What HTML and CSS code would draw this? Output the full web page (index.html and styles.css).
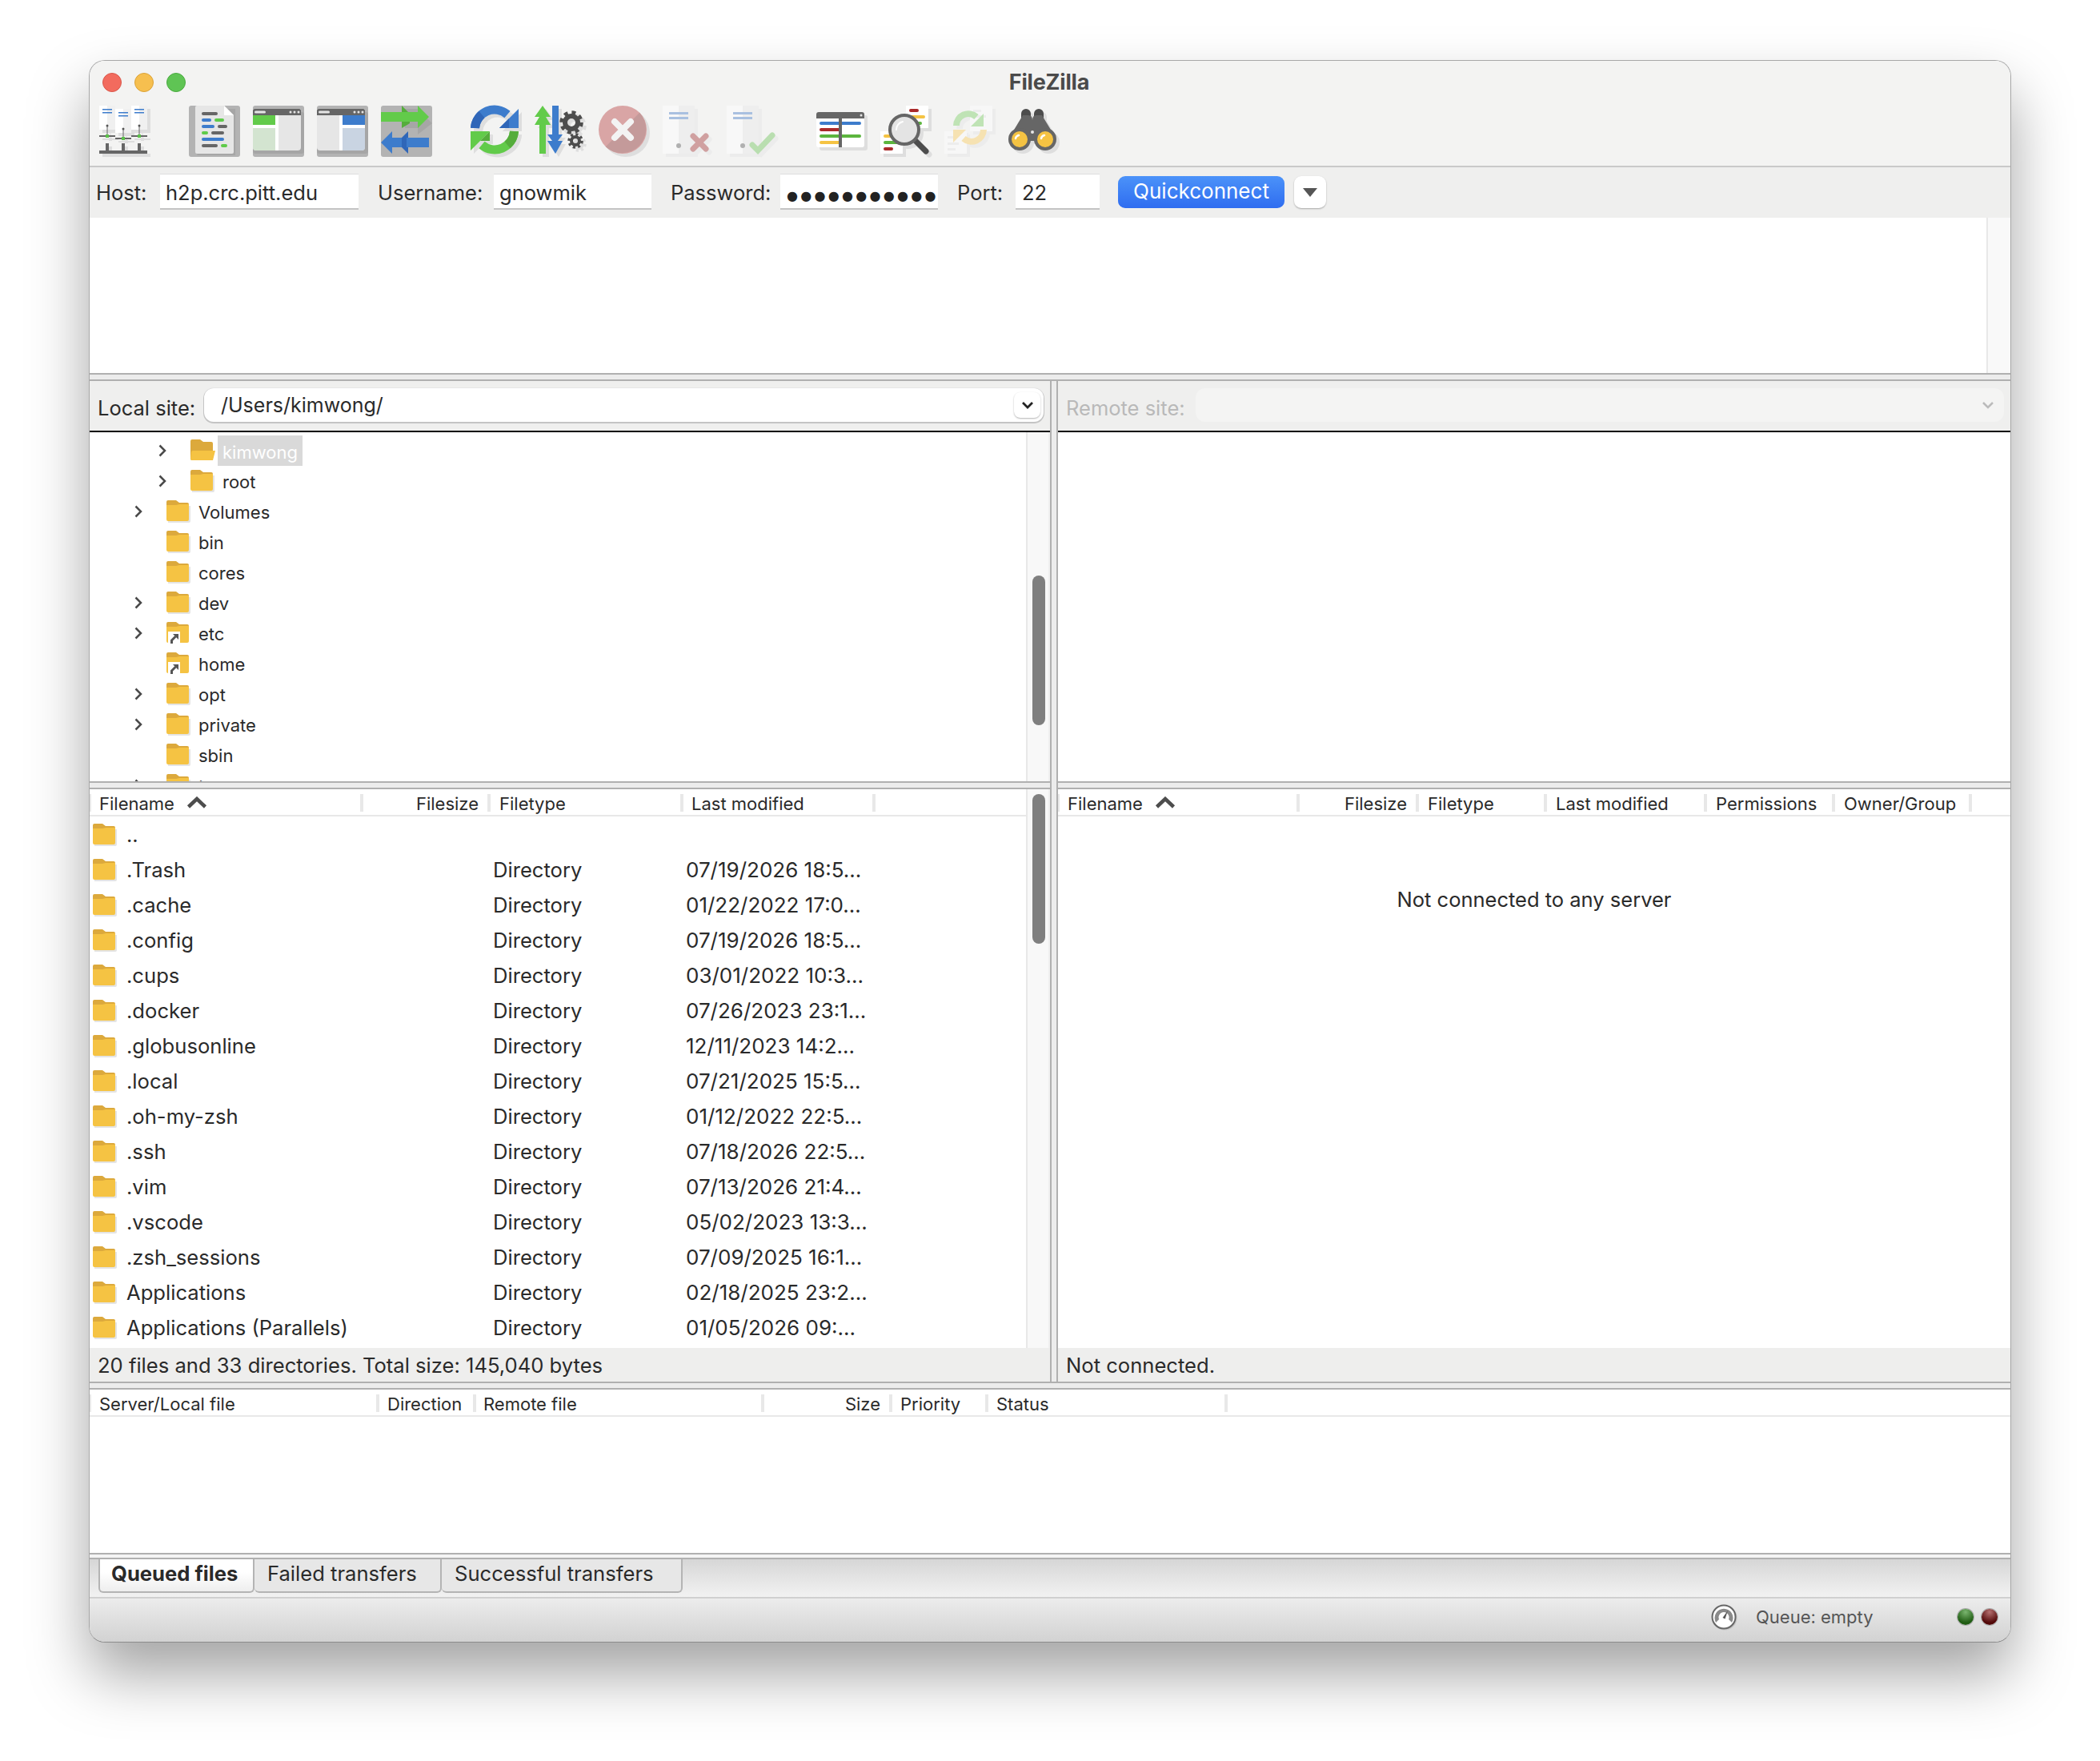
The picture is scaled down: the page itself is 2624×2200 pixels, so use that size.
FILE: index.html
```html
<!DOCTYPE html>
<html lang="en">
<head>
  <meta charset="UTF-8">
  <title>FileZilla</title>
  <link rel="stylesheet" href="styles.css">
</head>
<body>

  <!-- shared icons -->
  <svg class="defs" width="0" height="0">
    <symbol id="folder" viewBox="0 0 30 28">
      <path d="M2 7h28v19a2 2 0 0 1-2 2H2z" fill="#e4e4e4"/>
      <path d="M0 2a2 2 0 0 1 2-2h10l4 3h10a2 2 0 0 1 2 2v6H0z" fill="#dca93c"/>
      <path d="M0 6h12l4-1h12v19a2 2 0 0 1-2 2H2a2 2 0 0 1-2-2z" fill="#f5c343"/>
    </symbol>
    <symbol id="folder-open" viewBox="0 0 32 28">
      <path d="M0 2a2 2 0 0 1 2-2h10l4 3h10a2 2 0 0 1 2 2v19a2 2 0 0 1-2 2H2a2 2 0 0 1-2-2z" fill="#dca93c"/>
      <path d="M3 14h28l-3 12H2a2 2 0 0 1-2-2l1-8a2 2 0 0 1 2-2z" fill="#f5c343"/>
    </symbol>
    <symbol id="folder-link" viewBox="0 0 30 28">
      <path d="M0 2a2 2 0 0 1 2-2h10l4 3h10a2 2 0 0 1 2 2v6H0z" fill="#dca93c"/>
      <path d="M0 6h12l4-1h12v19a2 2 0 0 1-2 2H2a2 2 0 0 1-2-2z" fill="#f5c343"/>
      <rect x="2" y="12" width="15" height="16" fill="#fff"/>
      <path d="M6.500 27v-4l5-5" fill="none" stroke="#555" stroke-width="3"/>
      <path d="M8 15h7v7z" fill="#555"/>
    </symbol>
    <symbol id="chevron" viewBox="0 0 10 16">
      <path d="M1.500 1.500 8 8l-6.500 6.500" fill="none" stroke="#4a4a4a" stroke-width="2.500"/>
    </symbol>
    <symbol id="sort-up" viewBox="0 0 26 16">
      <path d="M2.500 13 13 3l10.500 10" fill="none" stroke="#4d4d4d" stroke-width="4.500"/>
    </symbol>
  </svg>

  <div class="window">

    <div class="titlebar">
      <div class="lights">
        <span class="light red"></span>
        <span class="light yellow"></span>
        <span class="light green"></span>
      </div>
      <div class="title">FileZilla</div>
    </div>

    <div class="toolbar">
      <!-- site manager -->
      <svg class="tool shadowed" viewBox="0 0 64 64">
        <rect x="0" y="0" width="10" height="30" fill="#fff"/><rect x="10" y="0" width="10" height="30" fill="#f0f0f0"/>
        <rect x="40" y="0" width="10" height="30" fill="#fff"/><rect x="50" y="0" width="10" height="30" fill="#f0f0f0"/>
        <rect x="20" y="4" width="10" height="30" fill="#fff"/><rect x="30" y="4" width="10" height="30" fill="#f0f0f0"/>
        <path d="M4 4h12v1.500H4zM4 8h12v1.500H4zM44 4h12v1.500H44zM44 8h12v1.500H44zM24 8h12v1.500H24zM24 12h12v1.500H24z" fill="#3d7ccc"/>
        <path d="M9.500 25h1v13h-1zM49.500 25h1v13h-1zM29.500 29h1v12h-1z" fill="#666"/>
        <path d="M0 37h20v2H0zM40 37h20v2H40zM20 40h20v2H20zM8 47h4v9H8zM28 47h4v9h-4zM48 47h4v9h-4zM0 56h60v4H0z" fill="#666"/>
        <circle cx="10" cy="25" r="1.500" fill="#555"/><circle cx="50" cy="25" r="1.500" fill="#555"/><circle cx="30" cy="29" r="1.500" fill="#555"/>
        <path d="M8 36h4v4H8zM48 36h4v4h-4zM28 39h4v4h-4z" fill="#5cc24a"/>
      </svg>
      <!-- message log -->
      <svg class="tool sep" viewBox="0 0 64 64">
        <rect width="64" height="64" rx="3" fill="#b3b3b3"/>
        <path d="M10 4h48v58H12a2 2 0 0 1-2-2z" fill="#a6a6a6"/>
        <path d="M8 2a2 2 0 0 1 2-2h34l12 12v46a2 2 0 0 1-2 2H10a2 2 0 0 1-2-2z" fill="#e6e6e6"/>
        <path d="M44 0l12 12H44z" fill="#fff"/>
        <g fill="#666"><rect x="16" y="8" width="20" height="4" rx="2"/><rect x="36" y="24" width="12" height="4" rx="2"/><rect x="28" y="32" width="16" height="4" rx="2"/><rect x="16" y="48" width="20" height="4" rx="2"/></g>
        <g fill="#3d7ccc"><rect x="16" y="16" width="12" height="4" rx="2"/><rect x="16" y="24" width="16" height="4" rx="2"/><rect x="16" y="40" width="28" height="4" rx="2"/></g>
        <g fill="#5fcb4a"><rect x="32" y="16" width="12" height="4" rx="2"/><rect x="16" y="32" width="8" height="4" rx="2"/><rect x="40" y="48" width="8" height="4" rx="2"/></g>
      </svg>
      <!-- local tree -->
      <svg class="tool" viewBox="0 0 64 64">
        <rect width="64" height="64" rx="3" fill="#b3b3b3"/>
        <rect x="0" y="8" width="64" height="52" rx="3" fill="#a6a6a6"/>
        <path d="M0 4h60v48a4 4 0 0 1-4 4H4a4 4 0 0 1-4-4z" fill="#e6e6e6"/>
        <path d="M0 12h28v12H0z" fill="#62cb4a"/><path d="M0 28h28v28H4a4 4 0 0 1-4-4z" fill="#d3e4d0"/>
        <path d="M0 24h32v4H0zM28 12h4v44h-4z" fill="#fff"/>
        <path d="M0 6a2 2 0 0 1 2-2h56a2 2 0 0 1 2 2v6H0z" fill="#666"/>
        <rect x="2" y="6.500" width="14" height="3" rx="1.500" fill="#e6e6e6"/>
        <g fill="#e6e6e6"><circle cx="47" cy="8" r="1.500"/><circle cx="52" cy="8" r="1.500"/><circle cx="57" cy="8" r="1.500"/></g>
      </svg>
      <!-- remote tree -->
      <svg class="tool" viewBox="0 0 64 64">
        <rect width="64" height="64" rx="3" fill="#b3b3b3"/>
        <rect x="0" y="8" width="64" height="52" rx="3" fill="#a6a6a6"/>
        <path d="M0 4h60v48a4 4 0 0 1-4 4H4a4 4 0 0 1-4-4z" fill="#e6e6e6"/>
        <path d="M32 12h28v12H32z" fill="#3d7ccc"/><path d="M32 28h28v24a4 4 0 0 1-4 4H32z" fill="#c9d4e2"/>
        <path d="M32 24h28v4H32zM28 12h4v44h-4z" fill="#fff"/>
        <path d="M0 6a2 2 0 0 1 2-2h56a2 2 0 0 1 2 2v6H0z" fill="#666"/>
        <rect x="2" y="6.500" width="14" height="3" rx="1.500" fill="#e6e6e6"/>
        <g fill="#e6e6e6"><circle cx="47" cy="8" r="1.500"/><circle cx="52" cy="8" r="1.500"/><circle cx="57" cy="8" r="1.500"/></g>
      </svg>
      <!-- transfer queue -->
      <svg class="tool" viewBox="0 0 64 64">
        <rect width="64" height="64" rx="3" fill="#b3b3b3"/>
        <path d="M30 4h16l18 18-18 14v-8H30z" fill="#a6a6a6"/>
        <path d="M26 0l10 10v12l-10 6z" fill="#55ad3c"/>
        <path d="M0 8h46V0l14 14-14 14v-8H0z" fill="#62cb4a"/>
        <path d="M60 40H14v-8L0 46l14 14v-8h46z" fill="#3d7ccc"/>
        <path d="M34 32l-8 8v12l8 8v-8h-2V40h2z" fill="#2f66b8"/>
      </svg>
      <!-- refresh -->
      <svg class="tool sep shadowed" viewBox="0 0 64 64">
        <path d="M5.500 28A24.500 24.500 0 0 1 46 11" fill="none" stroke="#3d7ccc" stroke-width="11"/>
        <path d="M5.500 28A24.500 24.500 0 0 1 14 11" fill="none" stroke="#2f66b8" stroke-width="11"/>
        <path d="M60 4v24H36z" fill="#3d7ccc"/><path d="M48 16l-12 12h12z" fill="#2f66b8"/>
        <path d="M54.500 32A24.500 24.500 0 0 1 14 49" fill="none" stroke="#62cb4a" stroke-width="11"/>
        <path d="M54.500 32A24.500 24.500 0 0 1 46 49" fill="none" stroke="#55ad3c" stroke-width="11"/>
        <path d="M0 56V32h24z" fill="#62cb4a"/><path d="M12 44l12-12v12z" fill="#55ad3c"/>
      </svg>
      <!-- processing -->
      <svg class="tool shadowed" viewBox="0 0 64 64">
        <path d="M6 60V24H0l6-10H0L10 0l10 14h-6l6 10h-6v36z" fill="#62cb4a"/>
        <path d="M22 0h8v36h5l-6 8h6L26 60 16 44h6l-6-8h6z" fill="#3d7ccc"/>
        <g fill="none" stroke="#4d4d4d">
          <circle cx="46" cy="21" r="12.500" stroke-width="4.500" stroke-dasharray="4.900 4.920"/>
          <circle cx="46" cy="21" r="8" stroke-width="6"/>
          <circle cx="51" cy="44" r="8" stroke-width="3.500" stroke-dasharray="3.100 3.180"/>
          <circle cx="51" cy="44" r="5" stroke-width="4"/>
        </g>
      </svg>
      <!-- cancel, disabled -->
      <svg class="tool shadowed" viewBox="0 0 64 64">
        <circle cx="30" cy="30" r="30" fill="#d9a5a5"/>
        <path d="M51.200 8.800A30 30 0 0 1 8.800 51.200z" fill="#c49a9a"/>
        <path d="M20 20l20 20M40 20 20 40" stroke="#f3f3f3" stroke-width="8" stroke-linecap="round"/>
      </svg>
      <!-- disconnect, disabled -->
      <svg class="tool shadowed-light" viewBox="0 0 64 64">
        <rect width="20" height="60" fill="#f8f8f8"/><rect x="20" width="20" height="60" fill="#eee"/>
        <path d="M8 8h24v3H8zM8 14h24v3H8z" fill="#a9c0e0"/>
        <circle cx="20" cy="50" r="3" fill="#b0b0b0"/>
        <path d="M38 38l16 16M54 38 38 54" stroke="#d0a0a0" stroke-width="7" stroke-linecap="round"/>
      </svg>
      <!-- reconnect, disabled -->
      <svg class="tool shadowed-light" viewBox="0 0 64 64">
        <rect width="20" height="60" fill="#f8f8f8"/><rect x="20" width="20" height="60" fill="#eee"/>
        <path d="M8 8h24v3H8zM8 14h24v3H8z" fill="#a9c0e0"/>
        <circle cx="20" cy="50" r="3" fill="#b0b0b0"/>
        <path d="M32 49l7 7 18-19" fill="none" stroke="#b9deb0" stroke-width="7" stroke-linecap="round"/>
      </svg>
      <!-- filename filters -->
      <svg class="tool sep shadowed" viewBox="0 0 64 64">
        <rect x="0" y="8" width="60" height="44" rx="3" fill="#fff"/>
        <path d="M0 11a3 3 0 0 1 3-3h54a3 3 0 0 1 3 3v5H0z" fill="#666"/>
        <circle cx="56" cy="12" r="1.500" fill="#e6e6e6"/>
        <rect x="4" y="20" width="52" height="4" rx="2" fill="#3d7ccc"/>
        <rect x="4" y="28" width="26" height="4" rx="2" fill="#aa2a2a"/>
        <rect x="4" y="36" width="52" height="4" rx="2" fill="#5cb53e"/>
        <rect x="4" y="44" width="26" height="4" rx="2" fill="#f5c343"/>
        <rect x="28" y="16" width="4" height="36" fill="#666"/>
      </svg>
      <!-- compare -->
      <svg class="tool shadowed" viewBox="0 0 64 64">
        <rect x="32" y="0" width="28" height="28" fill="#fff"/>
        <rect x="0" y="32" width="28" height="28" fill="#fff"/>
        <rect x="36" y="4" width="12" height="4" rx="2" fill="#aa2a2a"/>
        <rect x="36" y="12" width="20" height="4" rx="2" fill="#f5c343"/>
        <rect x="36" y="20" width="16" height="4" rx="2" fill="#5cb53e"/>
        <rect x="4" y="36" width="16" height="4" rx="2" fill="#f5c343"/>
        <rect x="4" y="44" width="20" height="4" rx="2" fill="#5cb53e"/>
        <rect x="4" y="52" width="12" height="4" rx="2" fill="#aa2a2a"/>
        <path d="M43 43l14 14" stroke="#4d4d4d" stroke-width="7" stroke-linecap="round"/>
        <circle cx="30" cy="30" r="18" fill="#e4e4e4" stroke="#666" stroke-width="4"/>
        <path d="M20 30a10 10 0 0 1 8-10" fill="none" stroke="#fff" stroke-width="2" stroke-linecap="round"/>
      </svg>
      <!-- synchronized browsing, disabled -->
      <svg class="tool shadowed-light" viewBox="0 0 64 64">
        <rect x="32" y="0" width="28" height="32" fill="#f7f7f7"/>
        <rect x="0" y="32" width="28" height="28" fill="#f7f7f7"/>
        <path d="M36 5h10v3H36zM4 38h10v3H4zM4 46h14v3H4zM4 53h10v3H4zM36 12h16v3H36z" fill="#ededed"/>
        <path d="M15 25A15 15 0 0 1 40 14" fill="none" stroke="#bfe3b5" stroke-width="8"/>
        <path d="M49 10v16H33z" fill="#bfe3b5"/>
        <path d="M49 30A15 15 0 0 1 24 41" fill="none" stroke="#f6e2b2" stroke-width="8"/>
        <path d="M11 46V30h16z" fill="#f6e2b2"/>
      </svg>
      <!-- search -->
      <svg class="tool shadowed" viewBox="0 0 64 64">
        <path d="M16 10a6 6 0 0 1 12 0v8H16zM32 10a6 6 0 0 1 12 0v8H32z" fill="#4d4d4d"/>
        <path d="M18 12h7q5 0 5 6 0-6 5-6h7l17 28v2H30 1v-2z" fill="#666"/>
        <circle cx="14" cy="42" r="14" fill="#666"/>
        <circle cx="46" cy="42" r="14" fill="#666"/>
        <path d="M20 30h20v14H20z" fill="#666"/>
        <circle cx="14" cy="42" r="10" fill="#f5c343"/>
        <circle cx="46" cy="42" r="10" fill="#f5c343"/>
        <path d="M9 41a5 5 0 0 1 4-4M41 41a5 5 0 0 1 4-4" fill="none" stroke="#fff" stroke-width="2.500" stroke-linecap="round"/>
        <circle cx="30" cy="33" r="2" fill="#e6e6e6"/>
      </svg>
    </div>

    <div class="connect">
      <span class="connect-label w-host">Host:</span>
      <div class="field f-host">h2p.crc.pitt.edu</div>
      <span class="connect-label w-user">Username:</span>
      <div class="field f-user">gnowmik</div>
      <span class="connect-label w-pass">Password:</span>
      <div class="field f-pass"><span class="dots">●●●●●●●●●●●●</span></div>
      <span class="connect-label w-port">Port:</span>
      <div class="field f-port">22</div>
      <div class="quick">Quickconnect</div>
      <div class="quick-drop"><span class="tri"></span></div>
    </div>

    <div class="log">
      <div class="log-text"></div>
      <div class="log-track"></div>
    </div>

    <div class="sash-h"></div>

    <div class="panes">

      <!-- local side -->
      <div class="pane">
        <div class="site-bar">
          <span class="site-label">Local site:</span>
          <div class="combo">
            <span class="combo-text">/Users/kimwong/</span>
            <span class="combo-btn">
              <svg width="16" height="10" viewBox="0 0 16 10"><path d="M2 2l6 6 6-6" fill="none" stroke="#222" stroke-width="2.800"/></svg>
            </span>
          </div>
        </div>

        <div class="tree-wrap">
          <div class="tree">
            <div class="tree-row lvl2"><svg class="chev"><use href="#chevron"/></svg><svg class="ficon-open"><use href="#folder-open"/></svg><span class="tree-label selected">kimwong</span></div>
            <div class="tree-row lvl2"><svg class="chev"><use href="#chevron"/></svg><svg class="ficon"><use href="#folder"/></svg><span class="tree-label">root</span></div>
            <div class="tree-row lvl1"><svg class="chev"><use href="#chevron"/></svg><svg class="ficon"><use href="#folder"/></svg><span class="tree-label">Volumes</span></div>
            <div class="tree-row lvl1"><span class="chev"></span><svg class="ficon"><use href="#folder"/></svg><span class="tree-label">bin</span></div>
            <div class="tree-row lvl1"><span class="chev"></span><svg class="ficon"><use href="#folder"/></svg><span class="tree-label">cores</span></div>
            <div class="tree-row lvl1"><svg class="chev"><use href="#chevron"/></svg><svg class="ficon"><use href="#folder"/></svg><span class="tree-label">dev</span></div>
            <div class="tree-row lvl1"><svg class="chev"><use href="#chevron"/></svg><svg class="ficon"><use href="#folder-link"/></svg><span class="tree-label">etc</span></div>
            <div class="tree-row lvl1"><span class="chev"></span><svg class="ficon"><use href="#folder-link"/></svg><span class="tree-label">home</span></div>
            <div class="tree-row lvl1"><svg class="chev"><use href="#chevron"/></svg><svg class="ficon"><use href="#folder"/></svg><span class="tree-label">opt</span></div>
            <div class="tree-row lvl1"><svg class="chev"><use href="#chevron"/></svg><svg class="ficon"><use href="#folder"/></svg><span class="tree-label">private</span></div>
            <div class="tree-row lvl1"><span class="chev"></span><svg class="ficon"><use href="#folder"/></svg><span class="tree-label">sbin</span></div>
            <div class="tree-row lvl1"><svg class="chev"><use href="#chevron"/></svg><svg class="ficon"><use href="#folder"/></svg><span class="tree-label">tmp</span></div>
          </div>
          <div class="track"><div class="thumb thumb-tree"></div></div>
        </div>

        <div class="sash-pane"></div>

        <div class="list-wrap">
          <div class="list">
            <div class="list-head">
              <div class="hcell c-name">Filename <svg class="sort"><use href="#sort-up"/></svg></div>
              <div class="hcell right c-size">Filesize</div>
              <div class="hcell c-type">Filetype</div>
              <div class="hcell c-date">Last modified</div>
            </div>
            <div class="file-row"><span class="file-name"><svg class="ficon"><use href="#folder"/></svg>..</span></div>
            <div class="file-row"><span class="file-name"><svg class="ficon"><use href="#folder"/></svg>.Trash</span><span>Directory</span><span class="file-date">07/19/2026 18:5...</span></div>
            <div class="file-row"><span class="file-name"><svg class="ficon"><use href="#folder"/></svg>.cache</span><span>Directory</span><span class="file-date">01/22/2022 17:0...</span></div>
            <div class="file-row"><span class="file-name"><svg class="ficon"><use href="#folder"/></svg>.config</span><span>Directory</span><span class="file-date">07/19/2026 18:5...</span></div>
            <div class="file-row"><span class="file-name"><svg class="ficon"><use href="#folder"/></svg>.cups</span><span>Directory</span><span class="file-date">03/01/2022 10:3...</span></div>
            <div class="file-row"><span class="file-name"><svg class="ficon"><use href="#folder"/></svg>.docker</span><span>Directory</span><span class="file-date">07/26/2023 23:1...</span></div>
            <div class="file-row"><span class="file-name"><svg class="ficon"><use href="#folder"/></svg>.globusonline</span><span>Directory</span><span class="file-date">12/11/2023 14:2...</span></div>
            <div class="file-row"><span class="file-name"><svg class="ficon"><use href="#folder"/></svg>.local</span><span>Directory</span><span class="file-date">07/21/2025 15:5...</span></div>
            <div class="file-row"><span class="file-name"><svg class="ficon"><use href="#folder"/></svg>.oh-my-zsh</span><span>Directory</span><span class="file-date">01/12/2022 22:5...</span></div>
            <div class="file-row"><span class="file-name"><svg class="ficon"><use href="#folder"/></svg>.ssh</span><span>Directory</span><span class="file-date">07/18/2026 22:5...</span></div>
            <div class="file-row"><span class="file-name"><svg class="ficon"><use href="#folder"/></svg>.vim</span><span>Directory</span><span class="file-date">07/13/2026 21:4...</span></div>
            <div class="file-row"><span class="file-name"><svg class="ficon"><use href="#folder"/></svg>.vscode</span><span>Directory</span><span class="file-date">05/02/2023 13:3...</span></div>
            <div class="file-row"><span class="file-name"><svg class="ficon"><use href="#folder"/></svg>.zsh_sessions</span><span>Directory</span><span class="file-date">07/09/2025 16:1...</span></div>
            <div class="file-row"><span class="file-name"><svg class="ficon"><use href="#folder"/></svg>Applications</span><span>Directory</span><span class="file-date">02/18/2025 23:2...</span></div>
            <div class="file-row"><span class="file-name"><svg class="ficon"><use href="#folder"/></svg>Applications (Parallels)</span><span>Directory</span><span class="file-date">01/05/2026 09:...</span></div>
          </div>
          <div class="track"><div class="thumb thumb-list"></div></div>
        </div>

        <div class="status-line">20 files and 33 directories. Total size: 145,040 bytes</div>
      </div>

      <div class="sash-v"></div>

      <!-- remote side -->
      <div class="pane">
        <div class="site-bar">
          <span class="site-label disabled">Remote site:</span>
          <div class="combo combo-off">
            <span class="combo-btn off">
              <svg width="16" height="10" viewBox="0 0 16 10"><path d="M2 2l6 6 6-6" fill="none" stroke="#bbb" stroke-width="2.500"/></svg>
            </span>
          </div>
        </div>
        <div class="tree-wrap"></div>
        <div class="sash-pane"></div>
        <div class="list-wrap">
          <div class="list">
            <div class="list-head">
              <div class="hcell r-name">Filename <svg class="sort"><use href="#sort-up"/></svg></div>
              <div class="hcell right r-size">Filesize</div>
              <div class="hcell r-type">Filetype</div>
              <div class="hcell r-date">Last modified</div>
              <div class="hcell r-perm">Permissions</div>
              <div class="hcell r-owner">Owner/Group</div>
            </div>
            <div class="empty-note">Not connected to any server</div>
          </div>
        </div>
        <div class="status-line">Not connected.</div>
      </div>
    </div>

    <div class="sash-h"></div>

    <div class="queue">
      <div class="list-head">
        <div class="hcell q-local">Server/Local file</div>
        <div class="hcell q-dir">Direction</div>
        <div class="hcell q-remote">Remote file</div>
        <div class="hcell right q-size">Size</div>
        <div class="hcell q-prio">Priority</div>
        <div class="hcell q-status">Status</div>
      </div>
    </div>

    <div class="sash-thin"></div>

    <div class="tabs">
      <div class="tab active">Queued files</div>
      <div class="tab t-failed">Failed transfers</div>
      <div class="tab t-ok">Successful transfers</div>
    </div>

    <div class="statusbar">
      <svg class="gauge" viewBox="0 0 32 32">
        <circle cx="16" cy="16" r="14.500" fill="#fff" stroke="#666" stroke-width="2"/>
        <path d="M6 23A11.500 11.500 0 1 1 26 23L22 19a6.500 6.500 0 1 0-12 0z" fill="#8a8a8a"/>
        <path d="M14.500 17 21 8l-3.500 10.500z" fill="#555"/>
      </svg>
      <span class="queue-text">Queue: empty</span>
      <span class="led led-green"></span>
      <span class="led led-red"></span>
    </div>

  </div>

</body>
</html>
```

FILE: styles.css
```css
* {
  box-sizing: border-box;
}

html, body {
  margin: 0;
  background: #fff;
}

body {
  width: 2624px;
  height: 2200px;
  padding: 75px 0 0 111px;
  font-family: Inter, "Noto Sans", sans-serif;
  color: #2a2a2a;
  overflow: hidden;
}

.defs {
  position: absolute;
}

.window {
  width: 2402px;
  height: 1977px;
  display: flex;
  flex-direction: column;
  background: #fff;
  border: 1px solid #a8a8a8;
  border-bottom-color: #8c8c8c;
  border-radius: 20px;
  overflow: hidden;
  box-shadow: 0 40px 75px rgba(0,0,0,0.36);
}

/* --- title --- */
.titlebar {
  height: 56px;
  flex: none;
  position: relative;
  background: #f3f3f2;
}

.lights {
  display: flex;
  gap: 16px;
  padding: 15px 0 0 16px;
}

.light {
  width: 24px;
  height: 24px;
  border-radius: 50%;
}

.light.red { background: #f26b5e; border: 1px solid #d9574b; }
.light.yellow { background: #f6bf4f; border: 1px solid #dba237; }
.light.green { background: #5fc454; border: 1px solid #4aaa40; }

.title {
  position: absolute;
  top: 11px;
  left: 0;
  right: 2px;
  text-align: center;
  font-size: 27px;
  line-height: 32px;
  font-weight: 700;
  color: #4a4a4a;
  letter-spacing: -0.2px;
}

/* --- toolbar --- */
.toolbar {
  height: 77px;
  flex: none;
  display: flex;
  gap: 16px;
  padding-left: 12px;
  background: #f3f3f2;
  border-bottom: 2px solid #c9c9c9;
}

.tool {
  width: 64px;
  height: 64px;
  flex: none;
  overflow: visible;
}

.tool.sep {
  margin-left: 32px;
}

.shadowed {
  filter: drop-shadow(4px 4px 0 #dedede);
}

.shadowed-light {
  filter: drop-shadow(4px 4px 0 #ececec);
}

/* --- connect bar --- */
.connect {
  height: 63px;
  flex: none;
  display: flex;
  align-items: flex-start;
  padding: 8px 0 0 8px;
  background: #efefee;
  font-size: 25.500px;
  line-height: 47px;
}

.connect-label {
  flex: none;
  white-space: nowrap;
}

.w-host { width: 80px; }
.w-user { width: 145px; }
.w-pass { width: 137px; }
.w-port { width: 73px; }

.field {
  height: 45px;
  flex: none;
  margin-right: 24px;
  padding-left: 7px;
  background: #fff;
  border-top: 1px solid #dedede;
  border-bottom: 2px solid #c4c4c4;
  line-height: 45px;
  overflow: hidden;
  white-space: nowrap;
}

.f-host { width: 248px; }
.f-user { width: 197px; }
.f-pass { width: 197px; padding-left: 8px; }
.f-port { width: 105px; padding-left: 8px; margin-right: 23px; }

.dots {
  font-family: "DejaVu Sans", sans-serif;
  font-size: 16px;
  letter-spacing: 3.300px;
  color: #222;
}

/* last dot, cut by the edge of the field */
.dots::after {
  content: "";
  display: inline-block;
  width: 11px;
  height: 11px;
  border-radius: 50%;
  background: #222;
}

.quick {
  width: 208px;
  height: 40px;
  flex: none;
  margin-top: 3px;
  text-align: center;
  color: #fff;
  font-size: 26px;
  line-height: 38px;
  border-radius: 9px;
  background: linear-gradient(#4b92f9, #2f6df0);
}

.quick-drop {
  width: 40px;
  height: 40px;
  flex: none;
  margin: 3px 0 0 12px;
  display: flex;
  align-items: center;
  justify-content: center;
  background: #fff;
  border-radius: 9px;
  box-shadow: 0 1px 2px rgba(0,0,0,0.3);
}

.tri {
  width: 0;
  height: 0;
  border-left: 9px solid transparent;
  border-right: 9px solid transparent;
  border-top: 11px solid #555;
}

/* --- message log --- */
.log {
  height: 194px;
  flex: none;
  display: flex;
  background: #fff;
}

.log-text {
  flex: 1;
}

.log-track {
  width: 30px;
  background: #f9f9f9;
  border-left: 2px solid #e8e8e8;
}

/* --- sashes --- */
.sash-h, .sash-pane {
  height: 10px;
  flex: none;
  background: #ececec;
  border-top: 2px solid #b0b0b0;
  border-bottom: 2px solid #b0b0b0;
}

.sash-v {
  background: #ececec;
  border-left: 2px solid #b0b0b0;
  border-right: 2px solid #b0b0b0;
}

.sash-thin {
  height: 8px;
  flex: none;
  background: #f4f4f4;
  border-top: 2px solid #b0b0b0;
  border-bottom: 2px solid #b0b0b0;
}

/* --- panes --- */
.panes {
  height: 1250px;
  flex: none;
  display: grid;
  grid-template-columns: 1200px 10px 1190px;
}

.pane {
  display: flex;
  flex-direction: column;
  min-width: 0;
}

.site-bar {
  height: 64px;
  flex: none;
  display: flex;
  align-items: flex-start;
  padding: 9px 8px 0 10px;
  background: #efefee;
  border-bottom: 2px solid #000;
  font-size: 25.500px;
}

.site-label {
  flex: none;
  width: 133px;
  line-height: 50px;
  white-space: nowrap;
}

.site-label.disabled {
  width: 162px;
  color: #b9b9b9;
}

.combo {
  flex: 1;
  height: 42px;
  display: flex;
  align-items: center;
  justify-content: space-between;
  padding: 0 4px 0 21px;
  background: #fff;
  border-radius: 12px;
  box-shadow: 0 1px 0 1px #c4c4c4, 0 0 0 1px #e6e6e6;
}

.combo-off {
  background: #f4f4f3;
  justify-content: flex-end;
  box-shadow: none;
}

.combo-text {
  font-size: 25px;
  line-height: 44px;
}

.combo-btn {
  width: 33px;
  height: 32px;
  display: flex;
  align-items: center;
  justify-content: center;
  background: #fff;
  border-radius: 8px;
  box-shadow: 0 1px 2px rgba(0,0,0,0.3);
}

.combo-btn.off {
  background: none;
  box-shadow: none;
}

.tree-wrap {
  height: 436px;
  flex: none;
  display: flex;
  background: #fff;
  overflow: hidden;
}

.tree {
  flex: 1;
  padding-top: 4px;
  font-size: 22px;
  overflow: hidden;
}

.tree-row {
  height: 38px;
  display: flex;
  align-items: center;
}

.lvl1 { padding-left: 56px; }
.lvl2 { padding-left: 86px; }

.chev {
  width: 10px;
  height: 16px;
  flex: none;
  margin-right: 30px;
}

.ficon {
  width: 30px;
  height: 28px;
  flex: none;
}

.ficon-open {
  width: 32px;
  height: 28px;
  flex: none;
  margin-right: -2px;
}

.tree-label {
  margin-left: 10px;
  padding-top: 2px;
  white-space: nowrap;
}

.tree-label.selected {
  height: 38px;
  line-height: 38px;
  margin-left: 4px;
  padding: 2px 6px 0;
  background: #d9d9d9;
  color: #fff;
}

.track {
  width: 30px;
  flex: none;
  padding-left: 6px;
  background: #f8f8f8;
  border-left: 2px solid #e8e8e8;
  border-right: 2px solid #f0f0f0;
}

.thumb {
  width: 16px;
  background: #7f7f7f;
  border-radius: 8px;
}

.thumb-tree {
  height: 187px;
  margin-top: 179px;
}

.thumb-list {
  height: 187px;
  margin-top: 6px;
}

.list-wrap {
  height: 698px;
  flex: none;
  display: flex;
  background: #fff;
}

.list {
  flex: 1;
  min-width: 0;
}

.list-head {
  height: 34px;
  display: flex;
  border-bottom: 2px solid #e8e8e8;
  font-size: 22px;
}

.hcell {
  height: 22px;
  margin-top: 6px;
  padding: 2px 0 0 10px;
  flex: none;
  display: flex;
  align-items: center;
  border-right: 4px solid #e8e8e8;
  line-height: 22px;
  white-space: nowrap;
}

.hcell.right {
  justify-content: flex-end;
  padding-right: 11px;
}

.sort {
  width: 26px;
  height: 16px;
  margin: -2px 0 0 15px;
}

.c-name { width: 342px; border-left: 2px solid #e8e8e8; }
.c-size { width: 159px; }
.c-type { width: 241px; padding-left: 11px; }
.c-date { width: 240px; }

.r-name { width: 302px; border-left: 2px solid #e8e8e8; }
.r-size { width: 149px; }
.r-type { width: 160px; padding-left: 11px; }
.r-date { width: 200px; padding-left: 11px; }
.r-perm { width: 160px; padding-left: 11px; }
.r-owner { width: 171px; padding-left: 11px; }

.file-row {
  height: 44px;
  display: grid;
  grid-template-columns: 504px 241px 1fr;
  align-items: center;
  font-size: 25.600px;
  line-height: 46px;
  white-space: nowrap;
}

.file-name {
  display: flex;
  align-items: center;
  gap: 12px;
  padding-left: 4px;
}

.file-date {
  font-size: 26px;
}

.empty-note {
  margin-top: 88px;
  text-align: center;
  font-size: 25.500px;
}

.status-line {
  height: 42px;
  flex: none;
  padding-left: 10px;
  background: #eeeeed;
  font-size: 25.600px;
  line-height: 44px;
  white-space: nowrap;
}

/* --- queue --- */
.queue {
  height: 204px;
  flex: none;
  background: #fff;
}

.q-local { width: 362px; border-left: 2px solid #e8e8e8; }
.q-dir { width: 121px; }
.q-remote { width: 360px; padding-left: 9px; }
.q-size { width: 160px; padding-right: 14px; }
.q-prio { width: 120px; }
.q-status { width: 299px; }

/* --- tabs and status --- */
.tabs {
  height: 49px;
  flex: none;
  display: flex;
  padding-left: 11px;
  background: linear-gradient(#d6d6d6, #f2f2f2);
  border-bottom: 2px solid #d0d0d0;
}

.tab {
  height: 42px;
  width: 234px;
  padding-left: 16px;
  font-size: 25.600px;
  line-height: 36px;
  background: #e7e7e7;
  border: 2px solid #b4b4b4;
  border-top: none;
  border-left: none;
  border-radius: 0 0 6px 6px;
  white-space: nowrap;
}

.tab.active {
  width: 195px;
  padding-left: 14px;
  font-weight: 700;
  background: linear-gradient(#ffffff 40%, #eeeeee);
  border-left: 2px solid #b4b4b4;
}

.tab.t-ok { width: 301px; }

.statusbar {
  height: 54px;
  flex: none;
  display: flex;
  align-items: center;
  padding: 0 0 8px 2026px;
  background: linear-gradient(#ececec, #d2d2d2);
}

.gauge {
  width: 32px;
  height: 32px;
  flex: none;
  filter: drop-shadow(1px 1px 0 #c4c4c4);
}

.queue-text {
  width: 252px;
  margin-left: 24px;
  flex: none;
  font-size: 22px;
  color: #555;
  white-space: nowrap;
}

.led {
  width: 20px;
  height: 20px;
  flex: none;
  margin-right: 10px;
  border-radius: 50%;
  box-shadow: 0 0 0 1px #aaa;
}

.led-green { background: radial-gradient(circle at 50% 20%, #7ab56f, #1f5c12 70%); }
.led-red { background: radial-gradient(circle at 50% 20%, #b56f6f, #520808 70%); }
```
